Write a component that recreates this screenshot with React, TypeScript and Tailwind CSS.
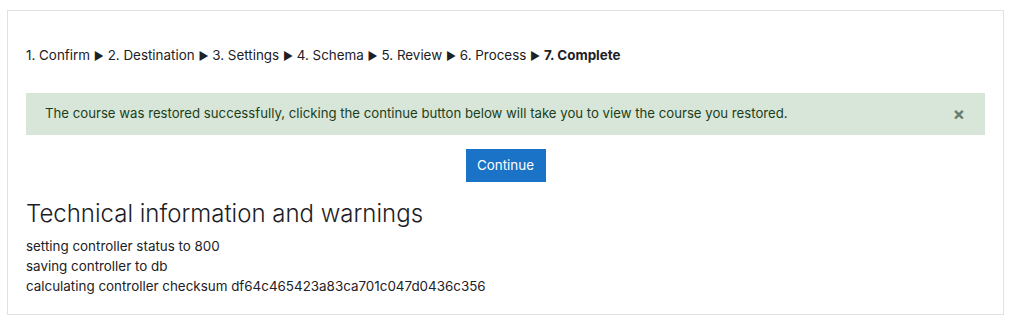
export default function App() {
  const steps = ["1. Confirm", "2. Destination", "3. Settings", "4. Schema", "5. Review", "6. Process"];
  const log = [
    "setting controller status to 800",
    "saving controller to db",
    "calculating controller checksum df64c465423a83ca701c047d0436c356",
  ];

  return (
    <div className="min-h-[324px] bg-white pt-[10px] pl-[7px] pr-[7px] font-['Inter',sans-serif] text-[#1d2125]">
      <div className="w-[997px] h-[305px] border border-[#dee2e6] px-[18px] pt-[34px]">
        <div className="text-[13.4px] leading-[20px]">
          {steps.map((s) => (
            <span key={s}>
              {s} <span className="text-[11px]">▶</span>{" "}
            </span>
          ))}
          <span className="font-bold">7. Complete</span>
        </div>

        <div className="mt-[27px] h-[42px] bg-[#d7e6d9] flex items-center justify-between pl-[19px] pr-[20px] text-[#1c3f1a] text-[13.2px]">
          <span>
            The course was restored successfully, clicking the continue button below will take you to view the course you restored.
          </span>
          <span className="text-[#6b7a6c] text-[18px] font-bold leading-none">×</span>
        </div>

        <div className="flex justify-center mt-[14px]">
          <button className="w-[80px] h-[33px] bg-[#1a73c7] text-white text-[13.4px]">Continue</button>
        </div>

        <h3 className="mt-[18px] text-[24px] font-light leading-[28px]">Technical information and warnings</h3>

        <div className="mt-[8px] text-[13.4px] leading-[20px]">
          {log.map((l) => (
            <div key={l}>{l}</div>
          ))}
        </div>
      </div>
    </div>
  );
}
